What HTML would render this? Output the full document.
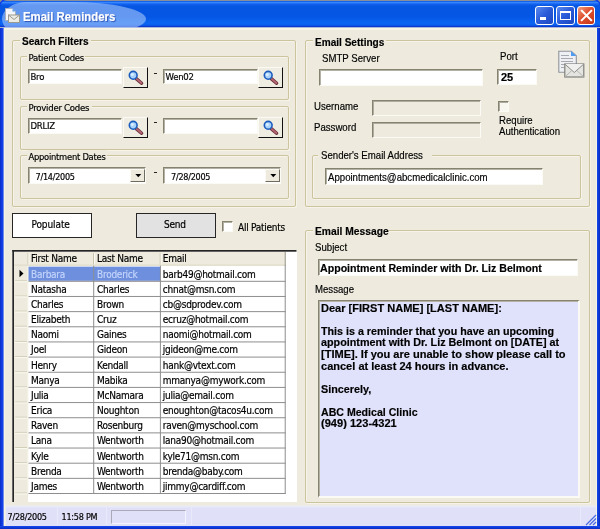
<!DOCTYPE html>
<html><head><meta charset="utf-8">
<style>
*{box-sizing:border-box;margin:0;padding:0}
html,body{width:600px;height:529px;overflow:hidden;background:#eeebde}
body{position:relative;font-family:"DejaVu Sans Condensed","DejaVu Sans","Liberation Sans",sans-serif;font-size:10px;letter-spacing:-.25px;color:#000}
.abs{position:absolute}
.t{position:absolute;white-space:nowrap;line-height:12px;-webkit-text-stroke:.18px currentColor}
.g{font-size:10px;letter-spacing:-.25px}
.l{font-size:9.5px;letter-spacing:-.25px}
.ar{font-family:"Liberation Sans",sans-serif;font-size:11px;letter-spacing:0;transform-origin:0 50%;transform:scaleX(.875)}
.ab{font-family:"Liberation Sans",sans-serif;font-size:11px;letter-spacing:0;font-weight:bold;transform-origin:0 50%;transform:scaleX(.915)}
.am{font-family:"Liberation Sans",sans-serif;font-size:11px;letter-spacing:0;font-weight:bold;transform-origin:0 50%;transform:scaleX(.965)}
.gb{position:absolute;border:1px solid #ccc49c;border-radius:2px;box-shadow:1px 1px 0 #f6f4ea,inset 1px 1px 0 #f6f4ea}
.gl{position:absolute;background:#eeebde;white-space:nowrap;line-height:12px;height:12px}
.in{position:absolute;background:#fff;border:1px solid #85836f;border-right-color:#fbfaf4;border-bottom-color:#fbfaf4;box-shadow:inset 1px 1px 0 #b4b2a4}
.in.dis{background:#eeebde;box-shadow:inset 1px 1px 0 #aeac9e}
.btn{position:absolute;background:#efede2;border:1px solid #fbfaf4;border-right:1.5px solid #111;border-bottom:1.5px solid #111}
</style></head><body><div id="root" style="position:absolute;left:0;top:0;width:600px;height:529px;will-change:transform">

<!-- window frame -->
<div class="abs" style="left:0;top:0;width:600px;height:529px;background:#0b3be4"></div>
<div class="abs" id="client" style="left:4px;top:27px;width:593px;height:499px;background:#eeebde"></div>
<div class="abs" style="left:0;top:20px;width:4px;height:509px;background:linear-gradient(90deg,#0a2cc8,#1648f0 3.200px,#8fa0e8 3.600px,#f6f4e2 4px)"></div>
<div class="abs" style="left:597px;top:20px;width:3px;height:509px;background:linear-gradient(90deg,#1648f0,#0a2cc0)"></div>
<div class="abs" style="left:0;top:526px;width:600px;height:3px;background:linear-gradient(#1648f0,#0a2cc0)"></div>
<div class="abs" style="left:4px;top:27px;width:593px;height:3px;background:linear-gradient(#fbfae9,#f3f1e2)"></div>
<div class="abs" id="title" style="left:0;top:0;width:600px;height:28px;border-radius:7px 7px 0 0;overflow:hidden;background:linear-gradient(#8a8e98 0,#8a8e98 .7px,#0a58e8 1.2px,#3a88ff 2.4px,#1462ee 4px,#0656e2 6px,#0556e4 17px,#0a66f2 23px,#0a5cec 25.300px,#0a3cd0 26.300px,#0a30c4 27.100px,#fbfae6 27.700px)">
<div class="abs" id="ell" style="left:2px;top:2px;width:144px;height:34px;border-radius:25px 75px 75px 25px / 17px;background:rgba(165,198,250,.6)"></div>
</div>
<div class="abs" style="left:0;top:0;width:3px;height:3px;background:radial-gradient(circle at 100% 100%,transparent 2.5px,#8c8f98 3px)"></div>
<div class="abs" style="left:597px;top:0;width:3px;height:3px;background:radial-gradient(circle at 0 100%,transparent 2.5px,#8c8f98 3px)"></div>

<!-- title icon -->
<svg class="abs" style="left:4.300px;top:7px" width="17" height="17" viewBox="0 0 17 17"><path d="M1.5 1.5h7l3 3v9h-10z" fill="#f4f6fa" stroke="#a9b0bd" stroke-width="1"/><path d="M8.5 1.5l3 3h-3z" fill="#5aa0ee"/><rect x="4.5" y="8" width="11" height="7.5" fill="#ecebe4" stroke="#9c9a90" stroke-width="1"/><path d="M4.5 8l5.5 4.5l5.5-4.5" fill="none" stroke="#9c9a90" stroke-width="1"/></svg>
<div class="t" style="left:23.300px;top:9.500px;font-family:'Liberation Sans',sans-serif;font-weight:bold;font-size:12.5px;letter-spacing:0;color:#fff;line-height:14px;text-shadow:1px 1px 1px rgba(20,50,150,.7);transform-origin:0 50%;transform:scaleX(.91)">Email Reminders</div>

<!-- window buttons -->
<div class="abs wb" style="left:535px;top:6px;width:19px;height:19px;border:1px solid #fff;border-radius:3px;background:linear-gradient(135deg,#5a8af0,#2a5ad8 50%,#1c48c0)"></div>
<div class="abs" style="left:540px;top:17px;width:6px;height:2.5px;background:#fff"></div>
<div class="abs wb" style="left:556px;top:6px;width:19px;height:19px;border:1px solid #fff;border-radius:3px;background:linear-gradient(135deg,#5a8af0,#2a5ad8 50%,#1c48c0)"></div>
<div class="abs" style="left:560px;top:10.500px;width:10.500px;height:9.500px;border:1.400px solid #fff;border-top-width:2.500px"></div>
<div class="abs wb" style="left:576.500px;top:6px;width:18.500px;height:19px;border:1px solid #fff;border-radius:3px;background:linear-gradient(135deg,#f0a080,#e05030 45%,#c43616)"></div>
<svg class="abs" style="left:576.500px;top:6px" width="19" height="19" viewBox="0 0 19 19"><path d="M4.800 4.800l9.400 9.400M14.200 4.800l-9.400 9.400" stroke="#fff" stroke-width="2" stroke-linecap="square"/></svg>

<!-- Search Filters -->
<div class="gb" style="left:12px;top:40px;width:284px;height:167px"></div>
<div class="gl" style="left:20px;top:35px;width:71px"></div><div class="t ab" style="left:21.500px;top:35.300px">Search Filters</div>

<div class="gb" style="left:20px;top:56px;width:269px;height:44px"></div>
<div class="gl" style="left:27px;top:52px;width:58px"></div><div class="t l" style="left:28.500px;top:52px">Patient Codes</div>
<div class="in " style="left:28px;top:69px;width:94px;height:15px"></div>
<div class="t l" style="left:30.500px;top:70.700px">Bro</div>
<div class="btn" style="left:123px;top:67px;width:25px;height:21px"></div><svg class="abs" style="left:123px;top:67px" width="24" height="21" viewBox="0 0 24 21"><line x1="13.2" y1="11.6" x2="18.6" y2="16.2" stroke="#6b2f3c" stroke-width="3.4" stroke-linecap="round"/><line x1="13.6" y1="11.9" x2="18.4" y2="16" stroke="#b56873" stroke-width="1.8" stroke-linecap="round"/><circle cx="10.2" cy="8.3" r="3.9" fill="#a9d2fb" stroke="#1c5cbd" stroke-width="1.6"/><circle cx="9.3" cy="7.4" r="1.5" fill="#d9eeff"/></svg>
<div class="abs" style="left:154px;top:73px;width:3px;height:1px;background:#222"></div>
<div class="in " style="left:163px;top:69px;width:95px;height:15px"></div>
<div class="t l" style="left:165.500px;top:70.700px">Wen02</div>
<div class="btn" style="left:258px;top:67px;width:25px;height:21px"></div><svg class="abs" style="left:258px;top:67px" width="24" height="21" viewBox="0 0 24 21"><line x1="13.2" y1="11.6" x2="18.6" y2="16.2" stroke="#6b2f3c" stroke-width="3.4" stroke-linecap="round"/><line x1="13.6" y1="11.9" x2="18.4" y2="16" stroke="#b56873" stroke-width="1.8" stroke-linecap="round"/><circle cx="10.2" cy="8.3" r="3.9" fill="#a9d2fb" stroke="#1c5cbd" stroke-width="1.6"/><circle cx="9.3" cy="7.4" r="1.5" fill="#d9eeff"/></svg>

<div class="gb" style="left:20px;top:106px;width:269px;height:44px"></div>
<div class="gl" style="left:27px;top:101px;width:65px"></div><div class="t l" style="left:28.500px;top:102px">Provider Codes</div>
<div class="in " style="left:28px;top:118px;width:94px;height:16px"></div>
<div class="t l" style="left:30.500px;top:120px">DRLIZ</div>
<div class="btn" style="left:123px;top:117px;width:25px;height:21px"></div><svg class="abs" style="left:123px;top:117px" width="24" height="21" viewBox="0 0 24 21"><line x1="13.2" y1="11.6" x2="18.6" y2="16.2" stroke="#6b2f3c" stroke-width="3.4" stroke-linecap="round"/><line x1="13.6" y1="11.9" x2="18.4" y2="16" stroke="#b56873" stroke-width="1.8" stroke-linecap="round"/><circle cx="10.2" cy="8.3" r="3.9" fill="#a9d2fb" stroke="#1c5cbd" stroke-width="1.6"/><circle cx="9.3" cy="7.4" r="1.5" fill="#d9eeff"/></svg>
<div class="abs" style="left:154px;top:122px;width:3px;height:1px;background:#222"></div>
<div class="in " style="left:163px;top:118px;width:95px;height:16px"></div>
<div class="btn" style="left:258px;top:117px;width:25px;height:21px"></div><svg class="abs" style="left:258px;top:117px" width="24" height="21" viewBox="0 0 24 21"><line x1="13.2" y1="11.6" x2="18.6" y2="16.2" stroke="#6b2f3c" stroke-width="3.4" stroke-linecap="round"/><line x1="13.6" y1="11.9" x2="18.4" y2="16" stroke="#b56873" stroke-width="1.8" stroke-linecap="round"/><circle cx="10.2" cy="8.3" r="3.9" fill="#a9d2fb" stroke="#1c5cbd" stroke-width="1.6"/><circle cx="9.3" cy="7.4" r="1.5" fill="#d9eeff"/></svg>

<div class="gb" style="left:20px;top:155px;width:269px;height:44px"></div>
<div class="gl" style="left:27px;top:150px;width:80px"></div><div class="t l" style="left:28.500px;top:150.500px;font-size:9.300px">Appointment Dates</div>
<div class="in" style="left:28px;top:167px;width:118px;height:17px"></div><div class="abs" style="left:130px;top:169px;width:15px;height:13px;background:#eeebde;border:1px solid #fbfaf4;border-right-color:#6e6c5e;border-bottom-color:#6e6c5e"></div><svg class="abs" style="left:132px;top:172px" width="12" height="8" viewBox="0 0 12 8"><path d="M3.300 2.100h6l-3 3.200z" fill="#000"/></svg>
<div class="t" style="left:35.500px;top:171px;font-size:9px">7/14/2005</div>
<div class="abs" style="left:154px;top:172px;width:3px;height:1px;background:#222"></div>
<div class="in" style="left:163px;top:167px;width:118px;height:17px"></div><div class="abs" style="left:265px;top:169px;width:15px;height:13px;background:#eeebde;border:1px solid #fbfaf4;border-right-color:#6e6c5e;border-bottom-color:#6e6c5e"></div><svg class="abs" style="left:267px;top:172px" width="12" height="8" viewBox="0 0 12 8"><path d="M3.300 2.100h6l-3 3.200z" fill="#000"/></svg>
<div class="t" style="left:171px;top:171px;font-size:9px">7/28/2005</div>

<!-- buttons -->
<div class="abs" style="left:12px;top:213px;width:80px;height:25px;background:#fff;border:1px solid #262626"></div>
<div class="t" style="left:31.500px;top:219.300px;letter-spacing:-.1px">Populate</div>
<div class="abs" style="left:136px;top:213px;width:80px;height:25px;background:#e2e2e2;border:1px solid #262626"></div>
<div class="t" style="left:164px;top:219px">Send</div>
<div class="in " style="left:222px;top:221px;width:11px;height:11px"></div>
<div class="t" style="left:238px;top:222px">All Patients</div>

<!--GRID-->
<div class="abs" id="grid" style="left:12px;top:250px;width:285px;height:252px;background:#fff"></div>
<svg class="abs" style="left:12px;top:250px" width="285" height="253" viewBox="0 0 285 253"><rect x="2.00" y="1.70" width="272.00" height="13.95" fill="#eeebde"/><rect x="2.00" y="1.70" width="14.00" height="250.30" fill="#eeebde"/><rect x="15.30" y="15.65" width="1.20" height="227.36" fill="#f6f4e8"/><rect x="2.00" y="14.65" width="272.00" height="1.00" fill="#ddd8c4"/><rect x="16.50" y="16.65" width="132.00" height="14.16" fill="#6d8fde"/><rect x="15.50" y="3.00" width="1.00" height="11.50" fill="#cbc5ae"/><rect x="16.50" y="3.00" width="1.00" height="11.50" fill="#fbfaf2"/><rect x="81.00" y="3.00" width="1.00" height="11.50" fill="#cbc5ae"/><rect x="82.00" y="3.00" width="1.00" height="11.50" fill="#fbfaf2"/><rect x="147.70" y="3.00" width="1.00" height="11.50" fill="#cbc5ae"/><rect x="148.70" y="3.00" width="1.00" height="11.50" fill="#fbfaf2"/><rect x="272.70" y="2.00" width="1.00" height="14.00" fill="#9a988c"/><rect x="16.50" y="30.81" width="257.20" height="1.00" fill="#8e8e8e"/><rect x="3.00" y="30.31" width="12.00" height="1.00" fill="#d2cdb8"/><rect x="3.00" y="31.31" width="12.00" height="1.00" fill="#faf9f0"/><rect x="16.50" y="45.96" width="257.20" height="1.00" fill="#8e8e8e"/><rect x="3.00" y="45.46" width="12.00" height="1.00" fill="#d2cdb8"/><rect x="3.00" y="46.46" width="12.00" height="1.00" fill="#faf9f0"/><rect x="16.50" y="61.12" width="257.20" height="1.00" fill="#8e8e8e"/><rect x="3.00" y="60.62" width="12.00" height="1.00" fill="#d2cdb8"/><rect x="3.00" y="61.62" width="12.00" height="1.00" fill="#faf9f0"/><rect x="16.50" y="76.28" width="257.20" height="1.00" fill="#8e8e8e"/><rect x="3.00" y="75.78" width="12.00" height="1.00" fill="#d2cdb8"/><rect x="3.00" y="76.78" width="12.00" height="1.00" fill="#faf9f0"/><rect x="16.50" y="91.43" width="257.20" height="1.00" fill="#8e8e8e"/><rect x="3.00" y="90.93" width="12.00" height="1.00" fill="#d2cdb8"/><rect x="3.00" y="91.93" width="12.00" height="1.00" fill="#faf9f0"/><rect x="16.50" y="106.59" width="257.20" height="1.00" fill="#8e8e8e"/><rect x="3.00" y="106.09" width="12.00" height="1.00" fill="#d2cdb8"/><rect x="3.00" y="107.09" width="12.00" height="1.00" fill="#faf9f0"/><rect x="16.50" y="121.75" width="257.20" height="1.00" fill="#8e8e8e"/><rect x="3.00" y="121.25" width="12.00" height="1.00" fill="#d2cdb8"/><rect x="3.00" y="122.25" width="12.00" height="1.00" fill="#faf9f0"/><rect x="16.50" y="136.91" width="257.20" height="1.00" fill="#8e8e8e"/><rect x="3.00" y="136.41" width="12.00" height="1.00" fill="#d2cdb8"/><rect x="3.00" y="137.41" width="12.00" height="1.00" fill="#faf9f0"/><rect x="16.50" y="152.06" width="257.20" height="1.00" fill="#8e8e8e"/><rect x="3.00" y="151.56" width="12.00" height="1.00" fill="#d2cdb8"/><rect x="3.00" y="152.56" width="12.00" height="1.00" fill="#faf9f0"/><rect x="16.50" y="167.22" width="257.20" height="1.00" fill="#8e8e8e"/><rect x="3.00" y="166.72" width="12.00" height="1.00" fill="#d2cdb8"/><rect x="3.00" y="167.72" width="12.00" height="1.00" fill="#faf9f0"/><rect x="16.50" y="182.38" width="257.20" height="1.00" fill="#8e8e8e"/><rect x="3.00" y="181.88" width="12.00" height="1.00" fill="#d2cdb8"/><rect x="3.00" y="182.88" width="12.00" height="1.00" fill="#faf9f0"/><rect x="16.50" y="197.53" width="257.20" height="1.00" fill="#8e8e8e"/><rect x="3.00" y="197.03" width="12.00" height="1.00" fill="#d2cdb8"/><rect x="3.00" y="198.03" width="12.00" height="1.00" fill="#faf9f0"/><rect x="16.50" y="212.69" width="257.20" height="1.00" fill="#8e8e8e"/><rect x="3.00" y="212.19" width="12.00" height="1.00" fill="#d2cdb8"/><rect x="3.00" y="213.19" width="12.00" height="1.00" fill="#faf9f0"/><rect x="16.50" y="227.85" width="257.20" height="1.00" fill="#8e8e8e"/><rect x="3.00" y="227.35" width="12.00" height="1.00" fill="#d2cdb8"/><rect x="3.00" y="228.35" width="12.00" height="1.00" fill="#faf9f0"/><rect x="16.50" y="243.00" width="257.20" height="1.00" fill="#8e8e8e"/><rect x="3.00" y="242.50" width="12.00" height="1.00" fill="#d2cdb8"/><rect x="3.00" y="243.50" width="12.00" height="1.00" fill="#faf9f0"/><rect x="81.20" y="15.65" width="1.00" height="228.35" fill="#8e8e8e"/><rect x="147.90" y="15.65" width="1.00" height="228.35" fill="#8e8e8e"/><rect x="272.70" y="15.65" width="1.00" height="228.35" fill="#8e8e8e"/><rect x="0.30" y="0.00" width="284.20" height="1.70" fill="#262626"/><rect x="0.30" y="0.00" width="1.70" height="252.00" fill="#262626"/><path d="M7.50 19.73l4 3.8l-4 3.8z" fill="#000"/></svg>
<div class="t g" style="left:31px;top:253.2px">First Name</div>
<div class="t g" style="left:97px;top:253.2px">Last Name</div>
<div class="t g" style="left:162.800px;top:253.2px">Email</div>
<div class="t g" style="left:31px;top:268.6px;color:#c4d4fb">Barbara</div>
<div class="t g" style="left:97px;top:268.6px;color:#c4d4fb">Broderick</div>
<div class="t g" style="left:162.800px;top:268.6px">barb49@hotmail.com</div>
<div class="t g" style="left:31px;top:283.8px;color:#000">Natasha</div>
<div class="t g" style="left:97px;top:283.8px;color:#000">Charles</div>
<div class="t g" style="left:162.800px;top:283.8px">chnat@msn.com</div>
<div class="t g" style="left:31px;top:298.9px;color:#000">Charles</div>
<div class="t g" style="left:97px;top:298.9px;color:#000">Brown</div>
<div class="t g" style="left:162.800px;top:298.9px">cb@sdprodev.com</div>
<div class="t g" style="left:31px;top:314.1px;color:#000">Elizabeth</div>
<div class="t g" style="left:97px;top:314.1px;color:#000">Cruz</div>
<div class="t g" style="left:162.800px;top:314.1px">ecruz@hotmail.com</div>
<div class="t g" style="left:31px;top:329.2px;color:#000">Naomi</div>
<div class="t g" style="left:97px;top:329.2px;color:#000">Gaines</div>
<div class="t g" style="left:162.800px;top:329.2px">naomi@hotmail.com</div>
<div class="t g" style="left:31px;top:344.4px;color:#000">Joel</div>
<div class="t g" style="left:97px;top:344.4px;color:#000">Gideon</div>
<div class="t g" style="left:162.800px;top:344.4px">jgideon@me.com</div>
<div class="t g" style="left:31px;top:359.5px;color:#000">Henry</div>
<div class="t g" style="left:97px;top:359.5px;color:#000">Kendall</div>
<div class="t g" style="left:162.800px;top:359.5px">hank@vtext.com</div>
<div class="t g" style="left:31px;top:374.7px;color:#000">Manya</div>
<div class="t g" style="left:97px;top:374.7px;color:#000">Mabika</div>
<div class="t g" style="left:162.800px;top:374.7px">mmanya@mywork.com</div>
<div class="t g" style="left:31px;top:389.9px;color:#000">Julia</div>
<div class="t g" style="left:97px;top:389.9px;color:#000">McNamara</div>
<div class="t g" style="left:162.800px;top:389.9px">julia@email.com</div>
<div class="t g" style="left:31px;top:405.0px;color:#000">Erica</div>
<div class="t g" style="left:97px;top:405.0px;color:#000">Noughton</div>
<div class="t g" style="left:162.800px;top:405.0px">enoughton@tacos4u.com</div>
<div class="t g" style="left:31px;top:420.2px;color:#000">Raven</div>
<div class="t g" style="left:97px;top:420.2px;color:#000">Rosenburg</div>
<div class="t g" style="left:162.800px;top:420.2px">raven@myschool.com</div>
<div class="t g" style="left:31px;top:435.3px;color:#000">Lana</div>
<div class="t g" style="left:97px;top:435.3px;color:#000">Wentworth</div>
<div class="t g" style="left:162.800px;top:435.3px">lana90@hotmail.com</div>
<div class="t g" style="left:31px;top:450.5px;color:#000">Kyle</div>
<div class="t g" style="left:97px;top:450.5px;color:#000">Wentworth</div>
<div class="t g" style="left:162.800px;top:450.5px">kyle71@msn.com</div>
<div class="t g" style="left:31px;top:465.6px;color:#000">Brenda</div>
<div class="t g" style="left:97px;top:465.6px;color:#000">Wentworth</div>
<div class="t g" style="left:162.800px;top:465.6px">brenda@baby.com</div>
<div class="t g" style="left:31px;top:480.8px;color:#000">James</div>
<div class="t g" style="left:97px;top:480.8px;color:#000">Wentworth</div>
<div class="t g" style="left:162.800px;top:480.8px">jimmy@cardiff.com</div>
<!--/GRID-->

<!-- Email Settings -->
<div class="gb" style="left:305px;top:40px;width:285px;height:167px"></div>
<div class="gl" style="left:313px;top:35px;width:73px"></div><div class="t ab" style="left:315px;top:35.700px">Email Settings</div>
<div class="t ar" style="left:322px;top:52px">SMTP Server</div>
<div class="in " style="left:319px;top:69px;width:164px;height:17px"></div>
<div class="t ar" style="left:500px;top:50px">Port</div>
<div class="in " style="left:497px;top:69px;width:40px;height:16px"></div>
<div class="t am" style="left:501px;top:71px;transform:none">25</div>
<div class="t ar" style="left:313.500px;top:99.700px">Username</div>
<div class="in dis" style="left:372px;top:100px;width:109px;height:16px"></div>
<div class="t ar" style="left:313.500px;top:121.300px">Password</div>
<div class="in dis" style="left:372px;top:122px;width:109px;height:16px"></div>
<div class="in dis" style="left:498px;top:101px;width:11px;height:11px;background:#f7f6ef"></div>
<div class="t ar" style="left:499px;top:114.500px;line-height:11.500px">Require<br>Authentication</div>
<div class="gb" style="left:312px;top:155px;width:269px;height:44px"></div>
<div class="gl" style="left:318px;top:149px;width:114px"></div><div class="t ar" style="left:321px;top:149px">Sender's Email Address</div>
<div class="in " style="left:325px;top:168px;width:218px;height:17px"></div>
<div class="t ar" style="left:328px;top:171px">Appointments@abcmedicalclinic.com</div>
<!-- mail icon -->
<svg class="abs" style="left:556px;top:48px" width="32" height="32" viewBox="0 0 32 32"><path d="M2.800 3.200h12.500l5 4.500v16.500h-17.500z" fill="#eef0f3" stroke="#90959c" stroke-width="1.100"/><path d="M15 3l5.400 5h-5.400z" fill="#4f9cf0"/><path d="M5 7.500h8M5 10.500h12M5 13.500h12M5 16.500h4M5 19.500h3" stroke="#a4a9b2" stroke-width="1.100"/><rect x="8.800" y="16" width="19" height="13" fill="#e4e4e1" stroke="#7f7f7c" stroke-width="1.200"/><path d="M8.800 16l9.500 8.500l9.500-8.500" fill="#f0f0ee" stroke="#8c8c89" stroke-width="1"/><path d="M8.800 29l7-6.500M27.800 29l-7-6.500" stroke="#b4b4b1" stroke-width="1"/></svg>

<!-- Email Message -->
<div class="gb" style="left:305px;top:230px;width:285px;height:273px"></div>
<div class="gl" style="left:313px;top:225px;width:75px"></div><div class="t ab" style="left:315px;top:225.300px;transform:scaleX(.935)">Email Message</div>
<div class="t ar" style="left:315px;top:241.300px">Subject</div>
<div class="in " style="left:318px;top:259px;width:260px;height:17px"></div>
<div class="t am" style="left:320px;top:262px">Appointment Reminder with Dr. Liz Belmont</div>
<div class="t ar" style="left:315px;top:283px">Message</div>
<div class="in" style="left:318px;top:300px;width:262px;height:198px;background:#dfe2fa;border-right-width:2px;border-bottom-width:2px"></div>
<div class="t am" style="left:320.500px;top:301.7px;transform:scaleX(1.003)">Dear [FIRST NAME] [LAST NAME]:</div>
<div class="t am" style="left:320.500px;top:324.8px;transform:scaleX(0.973)">This is a reminder that you have an upcoming</div>
<div class="t am" style="left:320.500px;top:336.4px;transform:scaleX(0.98)">appointment with Dr. Liz Belmont on [DATE] at</div>
<div class="t am" style="left:320.500px;top:348.0px;transform:scaleX(1.003)">[TIME]. If you are unable to show please call to</div>
<div class="t am" style="left:320.500px;top:359.6px;transform:scaleX(1.002)">cancel at least 24 hours in advance.</div>
<div class="t am" style="left:320.500px;top:382.7px;transform:scaleX(0.982)">Sincerely,</div>
<div class="t am" style="left:320.500px;top:405.8px;transform:scaleX(0.963)">ABC Medical Clinic</div>
<div class="t am" style="left:320.500px;top:417.4px;transform:scaleX(1.007)">(949) 123-4321</div>

<!-- status bar -->
<div class="abs" style="left:4px;top:505px;width:593px;height:21px;background:linear-gradient(#efede2 0,#ebebf4 1px,#e6e7f9 2px,#e0e1f8 3.500px,#e0e1f8 100%)"></div>
<div class="abs" style="left:4px;top:30px;width:1px;height:496px;background:#f6f4e2"></div><div class="abs" style="left:596px;top:30px;width:1px;height:496px;background:#f6f4e2"></div><div class="abs" style="left:5px;top:503px;width:1px;height:23px;background:#efeee8"></div>
<div class="t" style="left:7.500px;top:511px;font-size:9px">7/28/2005</div>
<div class="t" style="left:61.500px;top:511px;font-size:9px">11:58 PM</div>
<div class="abs" style="left:57px;top:507px;width:1px;height:18px;background:#e8e9fb"></div>
<div class="abs" style="left:106px;top:507px;width:1px;height:18px;background:#e8e9fb"></div>
<div class="abs" style="left:191px;top:507px;width:1px;height:18px;background:#e8e9fb"></div>
<div class="abs" style="left:580px;top:507px;width:1px;height:18px;background:#e8e9fb"></div>
<div class="abs" style="left:111px;top:510px;width:75px;height:14px;border:1px solid #a9a9b8;border-right-color:#f4f4ff;border-bottom-color:#f4f4ff"></div>
<svg class="abs" style="left:583px;top:512px" width="14" height="14" viewBox="0 0 14 14"><path d="M13 3L3 13M13 6.500L6.500 13M13 10L10 13" stroke="#4a6ae0" stroke-width="1.2"/></svg>

</div></body></html>
